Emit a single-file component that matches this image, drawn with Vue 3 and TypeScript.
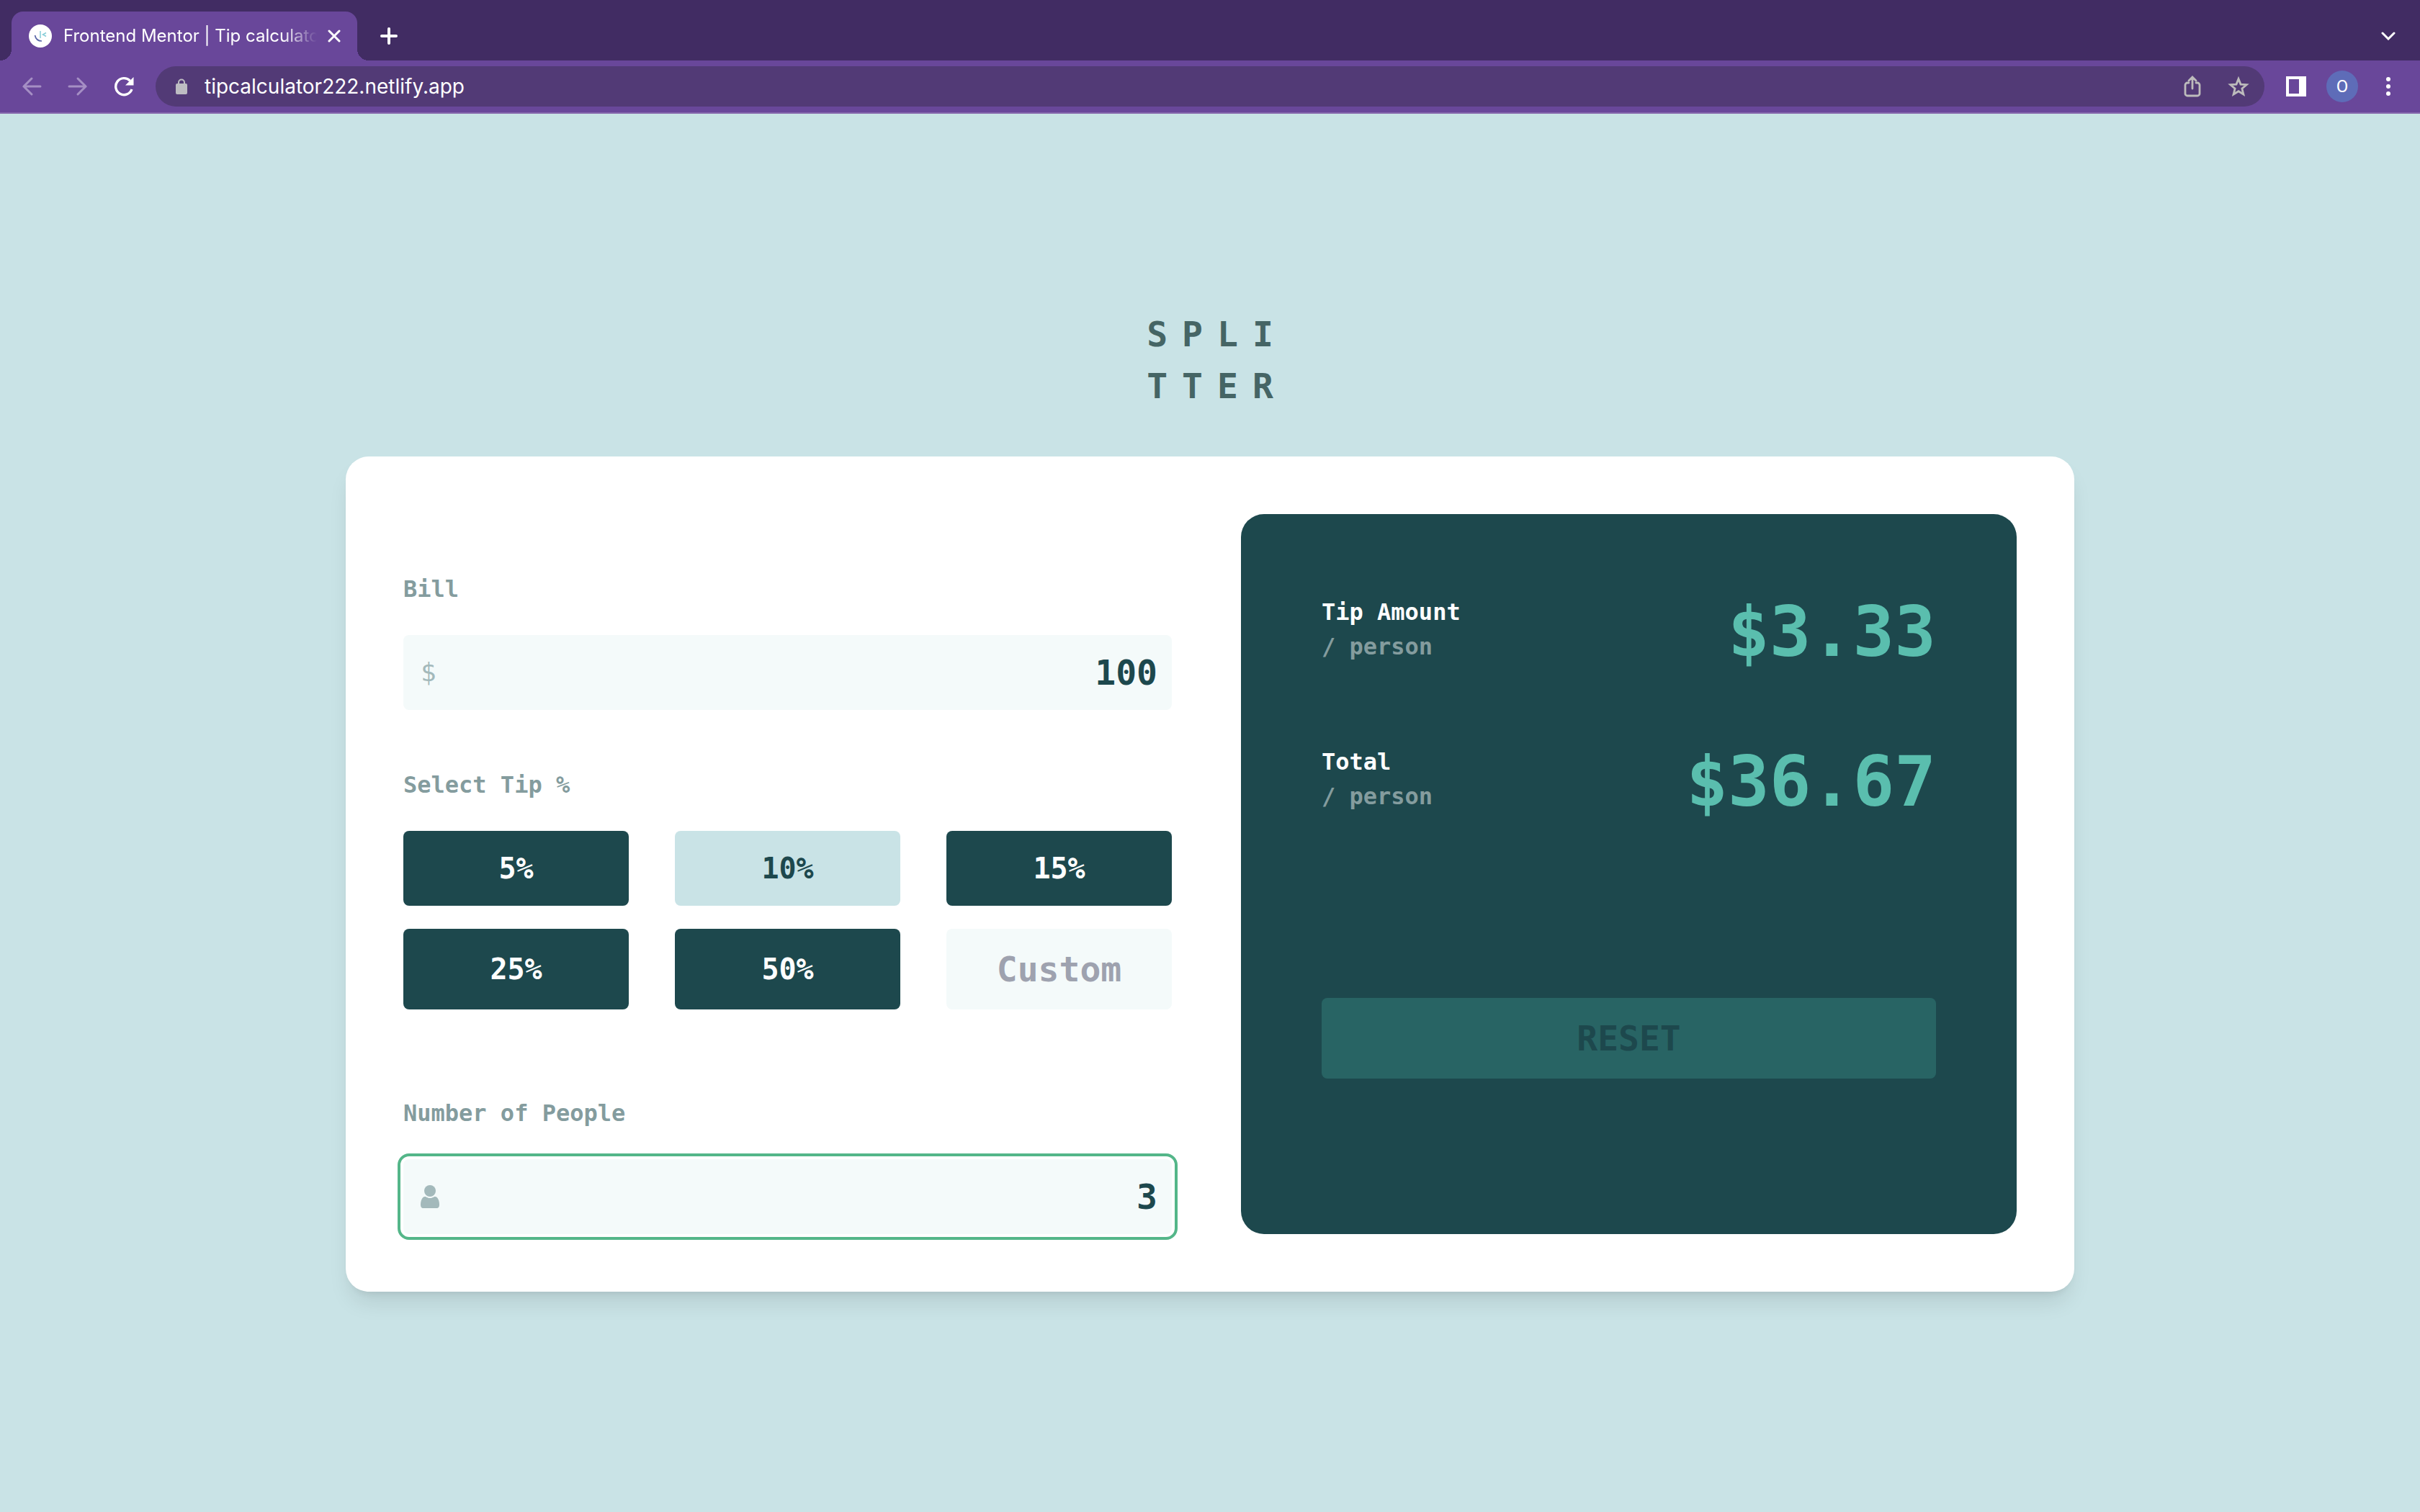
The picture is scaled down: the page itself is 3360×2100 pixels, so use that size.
<script setup lang="ts">
import { computed, ref } from 'vue'

type Field = 'bill' | 'people' | 'custom' | null

const presets: number[] = [5, 10, 15, 25, 50]

const address = ref('tipcalculator222.netlify.app')
const bill = ref('100')
const people = ref('3')
const custom = ref('')
const selected = ref<number | null>(10)
const active = ref<Field>('people')

const rate = computed(() => Number(custom.value) || selected.value || 0)
const heads = computed(() => Math.max(1, Number(people.value) || 1))
const tip = computed(() => ((Number(bill.value) || 0) * rate.value) / 100)
const tipEach = computed(() => (tip.value / heads.value).toFixed(2))
const totalEach = computed(() =>
  (((Number(bill.value) || 0) + tip.value) / heads.value).toFixed(2),
)

function choose(value: number): void {
  selected.value = value
  custom.value = ''
}

function reset(): void {
  bill.value = ''
  people.value = ''
  custom.value = ''
  selected.value = null
}
</script>

<template>
  <div class="window">
    <header class="browser">
      <div class="tabs">
        <div class="tab">
          <svg class="favicon" viewBox="0 0 32 32" aria-hidden="true">
            <circle cx="16" cy="16" r="16" fill="#fff" />
            <path d="M16 9v10" stroke="#86cdd8" stroke-width="1.5" fill="none" />
            <path d="M24 11.500l-4.500 2.500 4.500 2.500" stroke="#86cdd8" stroke-width="1.500" fill="none" />
            <path d="M8.500 15c1 5 4.500 8 9.500 8" stroke="#5a67a8" stroke-width="1.700" fill="none" />
          </svg>
          <span class="tab-title">Frontend Mentor | Tip calculator</span>
          <button class="icon close" type="button" aria-label="Close tab">
            <svg width="18" height="18" viewBox="0 0 18 18"><path d="M2 2l14 14M16 2L2 16" stroke="#fff" stroke-width="3" stroke-linecap="round" /></svg>
          </button>
        </div>
        <button class="icon new-tab" type="button" aria-label="New tab">
          <svg width="24" height="24" viewBox="0 0 24 24"><path d="M12 2v20M2 12h20" stroke="#fff" stroke-width="4" stroke-linecap="round" /></svg>
        </button>
        <button class="icon search-tabs" type="button" aria-label="Search tabs">
          <svg width="20" height="12" viewBox="0 0 20 12"><path d="M2 2l8 8 8-8" fill="none" stroke="#fff" stroke-width="3" stroke-linecap="round" /></svg>
        </button>
      </div>
      <div class="toolbar">
        <button class="icon" type="button" aria-label="Back">
          <svg width="28" height="28" viewBox="0 0 28 28"><path d="M26 14H3M14 3L3 14l11 11" fill="none" stroke="#a58fc4" stroke-width="3" stroke-linecap="round" /></svg>
        </button>
        <button class="icon" type="button" aria-label="Forward">
          <svg width="28" height="28" viewBox="0 0 28 28"><path d="M2 14h23M14 3l11 11-11 11" fill="none" stroke="#a58fc4" stroke-width="3" stroke-linecap="round" /></svg>
        </button>
        <button class="icon" type="button" aria-label="Reload">
          <svg width="28" height="28" viewBox="0 0 28 28">
            <path d="M25 18A11.500 11.500 0 1 1 22.500 6.200" fill="none" stroke="#fff" stroke-width="3.400" />
            <path d="M27.500 1v11.500H16z" fill="#fff" />
          </svg>
        </button>
        <div class="omnibox">
          <svg class="lock" width="16" height="22" viewBox="0 0 16 22" aria-hidden="true">
            <path d="M4 9V5.500a4 4 0 0 1 8 0V9" fill="none" stroke="#bdbcc2" stroke-width="2" />
            <rect y="7" width="16" height="15" rx="2" fill="#bdbcc2" />
          </svg>
          <input v-model="address" class="address" type="text" aria-label="Address" spellcheck="false" />
          <button class="icon" type="button" aria-label="Share">
            <svg width="24" height="30" viewBox="0 0 24 30">
              <path d="M7 10H5a3 3 0 0 0-3 3v12a3 3 0 0 0 3 3h14a3 3 0 0 0 3-3V13a3 3 0 0 0-3-3h-2M12 18V3M7 7l5-5 5 5" fill="none" stroke="#bdbcbc" stroke-width="2.800" stroke-linecap="round" />
            </svg>
          </button>
          <button class="icon" type="button" aria-label="Bookmark this tab">
            <svg width="30" height="28" viewBox="0 0 30 28">
              <path d="M15 3.500l3 7.600 8.200.6-6.300 5.300 2 8-6.900-4.300L8.100 25l2-8-6.300-5.300 8.200-.6z" fill="none" stroke="#bdbcbc" stroke-width="2.800" />
            </svg>
          </button>
        </div>
        <button class="icon" type="button" aria-label="Side panel">
          <svg width="28" height="28" viewBox="0 0 28 28"><path fill="#fff" fill-rule="evenodd" d="M0 0h28v28H0zM4 4v20h14V4z" /></svg>
        </button>
        <button class="icon" type="button" aria-label="Profile">
          <span class="avatar">O</span>
        </button>
        <button class="icon" type="button" aria-label="Menu">
          <svg width="8" height="28" viewBox="0 0 8 28" fill="#fff"><circle cx="4" cy="4" r="3" /><circle cx="4" cy="14" r="3" /><circle cx="4" cy="24" r="3" /></svg>
        </button>
      </div>
    </header>

    <main class="page">
      <h1 class="logo">SPLI<br />TTER</h1>
      <section class="card">
        <form class="inputs" @submit.prevent>
          <label class="label" for="bill">Bill</label>
          <div class="field" :class="{ active: active === 'bill' }">
            <span class="dollar" aria-hidden="true">$</span>
            <input id="bill" v-model="bill" class="value" type="text" inputmode="decimal" @focus="active = 'bill'" />
          </div>

          <p id="tip-label" class="label next">Select Tip %</p>
          <div class="tips" role="group" aria-labelledby="tip-label">
            <button
              v-for="value in presets"
              :key="value"
              type="button"
              class="tip"
              :class="{ selected: value === selected }"
              @click="choose(value)"
            >{{ value }}%</button>
            <input
              v-model="custom"
              class="custom"
              type="text"
              inputmode="decimal"
              placeholder="Custom"
              aria-label="Custom tip percentage"
              @focus="active = 'custom'"
            />
          </div>

          <label class="label last" for="people">Number of People</label>
          <div class="field" :class="{ active: active === 'people' }">
            <svg width="26" height="32" viewBox="0 0 26 32" fill="#a3b9bb" aria-hidden="true">
              <circle cx="13" cy="8" r="8" />
              <path d="M6 16c2 0 3 2 7 2s5-2 7-2c4 0 6 6 6 11 0 3-1 5-4 5H4c-3 0-4-2-4-5 0-5 2-11 6-11z" />
            </svg>
            <input id="people" v-model="people" class="value" type="text" inputmode="numeric" @focus="active = 'people'" />
          </div>
        </form>

        <div class="results">
          <div class="result">
            <p class="caption">Tip Amount<br /><span class="per">/ person</span></p>
            <output class="amount">${{ tipEach }}</output>
          </div>
          <div class="result">
            <p class="caption">Total<br /><span class="per">/ person</span></p>
            <output class="amount">${{ totalEach }}</output>
          </div>
          <button class="reset" type="button" @click="reset">RESET</button>
        </div>
      </section>
    </main>
  </div>
</template>

<style>
body {
  margin: 0;
  background: #c9e3e6;
}
</style>

<style scoped>
.window {
  min-height: 100vh;
  background: #c9e3e6;
  font-family: "DejaVu Sans Mono", "Liberation Mono", monospace;
  font-weight: 700;
}

button,
input {
  margin: 0;
  padding: 0;
  border: 0;
  background: none;
  font: inherit;
  outline: none;
}

button {
  cursor: pointer;
}

p,
h1 {
  margin: 0;
}

.browser {
  font-family: Inter, "Liberation Sans", sans-serif;
  font-weight: 400;
  background: #412c63;
  color: #fff;
}

.tabs {
  display: flex;
  align-items: center;
  padding: 16px 16px 0;
}

.tab {
  position: relative;
  display: flex;
  align-items: center;
  box-sizing: border-box;
  width: 480px;
  height: 68px;
  padding: 0 16px 0 24px;
  border-radius: 16px 16px 0 0;
  background: #69479a;
}

.tab::before,
.tab::after {
  content: "";
  position: absolute;
  bottom: 0;
  width: 16px;
  height: 16px;
}

.tab::before {
  right: 100%;
  background: radial-gradient(circle at 0 0, transparent 16px, #69479a 16px);
}

.tab::after {
  left: 100%;
  background: radial-gradient(circle at 100% 0, transparent 16px, #69479a 16px);
}

.favicon {
  flex: none;
  width: 32px;
  height: 32px;
  margin-right: 16px;
}

.tab-title {
  flex: 1;
  overflow: hidden;
  font-size: 24px;
  line-height: 32px;
  white-space: nowrap;
  mask-image: linear-gradient(to right, #000 calc(100% - 48px), transparent);
}

.icon {
  display: flex;
  flex: none;
  align-items: center;
  justify-content: center;
  width: 64px;
  height: 56px;
}

.close {
  width: 32px;
  height: 32px;
  margin-left: 8px;
}

.new-tab {
  width: 56px;
  margin-left: 16px;
}

.search-tabs {
  width: 56px;
  margin-left: auto;
}

.toolbar {
  display: flex;
  align-items: center;
  height: 72px;
  padding: 0 12px;
  border-bottom: 2px solid #8769ae;
  background: #69479a;
}

.omnibox {
  display: flex;
  flex: 1;
  align-items: center;
  height: 56px;
  margin: 0 12px;
  padding: 0 4px 0 28px;
  border-radius: 28px;
  background: #523a76;
}

.lock {
  flex: none;
  margin-right: 24px;
}

.address {
  flex: 1;
  min-width: 0;
  color: #fff;
  font-size: 28px;
  line-height: 40px;
}

.avatar {
  width: 44px;
  border-radius: 50%;
  background: #5e6cb8;
  color: #fff;
  font-family: Roboto, sans-serif;
  font-size: 24px;
  line-height: 44px;
  text-align: center;
}

.page {
  display: flex;
  flex-direction: column;
  align-items: center;
  padding: 270px 80px 80px;
}

.logo {
  margin-bottom: 62px;
  padding-left: 20px;
  color: #456565;
  font-size: 48px;
  line-height: 72px;
  letter-spacing: 20px;
}

.card {
  display: grid;
  grid-template-columns: 1067fr 1077fr;
  gap: 96px;
  box-sizing: border-box;
  width: 100%;
  max-width: 2400px;
  padding: 80px;
  border-radius: 32px;
  background: #fff;
  box-shadow: 0 20px 30px -6px rgba(0, 0, 0, 0.1), 0 8px 12px -8px rgba(0, 0, 0, 0.1);
}

.inputs {
  display: flex;
  flex-direction: column;
  padding-top: 80px;
}

.label {
  margin-bottom: 40px;
  color: #849c9e;
  font-size: 32px;
  line-height: 48px;
}

.next {
  margin-top: 80px;
}

.last {
  margin-top: 120px;
}

.field {
  display: flex;
  align-items: center;
  height: 104px;
  padding: 0 20px 0 24px;
  border-radius: 8px;
  background: #f4fafa;
}

.active {
  outline: 4px solid #54b689;
  outline-offset: 4px;
}

.dollar {
  color: #a3b9bb;
  font-size: 36px;
  font-weight: 400;
  line-height: 48px;
}

.value {
  flex: 1;
  min-width: 0;
  color: #1d484d;
  font-size: 48px;
  line-height: 72px;
  text-align: right;
}

.tips {
  display: grid;
  grid-template-columns: repeat(3, minmax(0, 1fr));
  grid-template-rows: 104px 112px;
  gap: 32px 64px;
}

.tip {
  border-radius: 8px;
  background: #1d484d;
  color: #fff;
  font-size: 40px;
  line-height: 56px;
}

.selected {
  background: #c9e3e6;
  color: #1d484d;
}

.custom {
  min-width: 0;
  border-radius: 8px;
  background: #f4fafa;
  color: #1d484d;
  font-size: 48px;
  line-height: 72px;
  text-align: center;
}

.custom::placeholder {
  color: #9ea2af;
  opacity: 1;
}

.results {
  display: flex;
  flex-direction: column;
  padding: 112px;
  border-radius: 32px;
  background: #1d484d;
}

.result {
  display: flex;
  justify-content: space-between;
  margin-bottom: 104px;
}

.caption {
  color: #fff;
  font-size: 32px;
  line-height: 48px;
}

.per {
  color: #849c9e;
}

.amount {
  color: #5abeae;
  font-size: 96px;
  line-height: 104px;
}

.reset {
  height: 112px;
  margin-top: 144px;
  border-radius: 8px;
  background: #286464;
  color: #1d484d;
  font-size: 48px;
  line-height: 72px;
}
</style>
